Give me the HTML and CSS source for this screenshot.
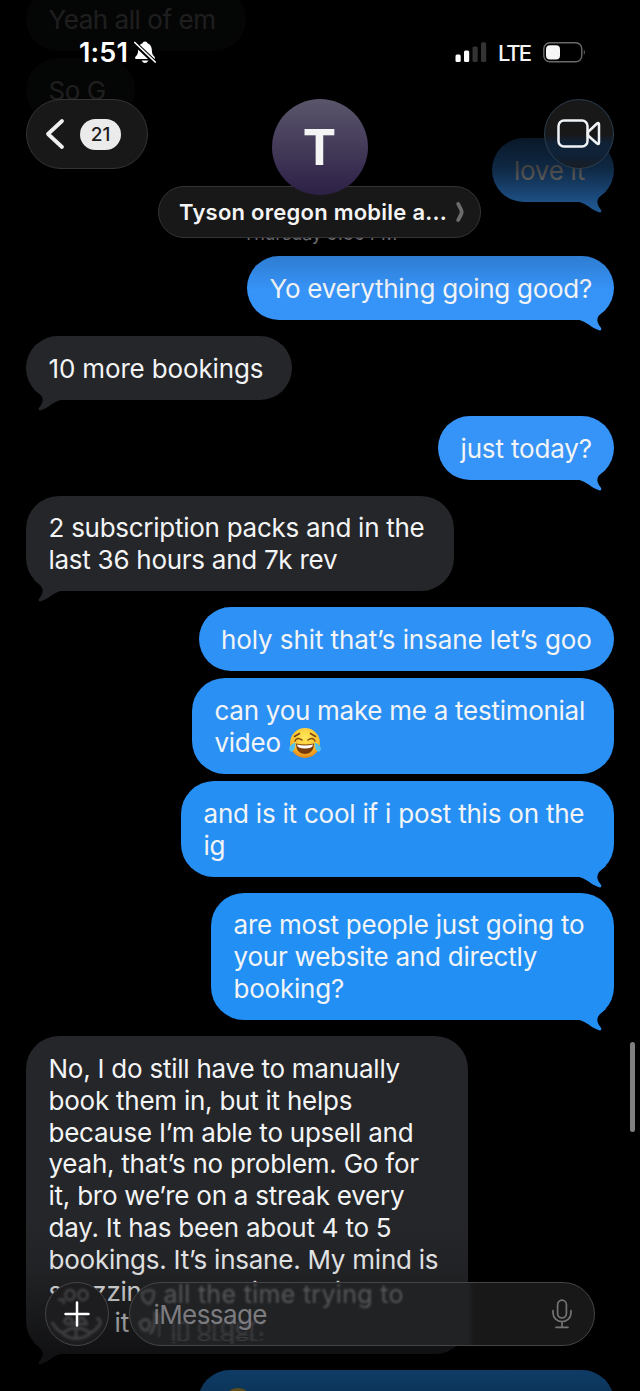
FILE: index.html
```html
<!DOCTYPE html>
<html lang="en">
<head>
<meta charset="utf-8">
<title>Messages</title>
<link rel="stylesheet" href="styles.css">
</head>
<body>
<svg width="0" height="0" class="defs">
  <defs>
    <radialGradient id="face" cx="50%" cy="30%" r="75%"><stop offset="0" stop-color="#ffe95a"/><stop offset=".6" stop-color="#fbc02d"/><stop offset="1" stop-color="#e07a12"/></radialGradient>
    <symbol id="tail" viewBox="0 0 32 26"><path fill="currentColor" d="M-2 15C5 15 10 22 19 25.300Q22.500 26 20.800 22.500C17 17.500 16.500 14.500 18.500 11Q20 8 26 4L16 0H0Z"/></symbol>
    <symbol id="joy" viewBox="0 0 32 32">
      <circle cx="16" cy="16" r="15" fill="url(#face)"/>
      <path d="M6 14q2-4.500 7-1M19 13q5-3.500 7 1M5.500 9.500l5-3M21.500 6.500l5 3" fill="none" stroke="#7b4310" stroke-width="1.500" stroke-linecap="round"/>
      <path d="M7 16.500Q16 18.500 25 16.500Q25 27 16 27Q7 27 7 16.500Z" fill="#7a3b0c"/>
      <path d="M8 17.500Q16 19.500 24 17.500Q24 21.500 16 21.500Q8 21.500 8 17.500Z" fill="#fff"/>
      <path d="M6.500 15.500Q0 18 0 22Q1 26 4 24Q6 22 6.500 15.500ZM25.500 15.500Q32 18 32 22Q31 26 28 24Q26 22 25.500 15.500Z" fill="#4fc3ee"/>
    </symbol>
  </defs>
</svg>
<div class="screen">
  <main class="thread">
    <div class="msg in w-yeah"><p>Yeah all of em</p></div>
    <div class="msg in w-sog"><p>So G</p></div>
    <div class="msg out w-love first-out"><p>love it</p><svg class="tail"><use href="#tail"/></svg></div>
    <div class="date">Thursday 9:36 PM</div>
    <div class="msg out w-yo"><p>Yo everything going good?</p><svg class="tail"><use href="#tail"/></svg></div>
    <div class="msg in w-ten turn"><p>10 more bookings</p><svg class="tail"><use href="#tail"/></svg></div>
    <div class="msg out w-just turn"><p>just today?</p><svg class="tail"><use href="#tail"/></svg></div>
    <div class="msg in w-two turn"><p>2 subscription packs and in the<br>last 36 hours and 7k rev</p><svg class="tail"><use href="#tail"/></svg></div>
    <div class="msg out w-holy turn tone-b"><p>holy shit that’s insane let’s goo</p></div>
    <div class="msg out w-can tone-c"><p>can you make me a testimonial<br>video <svg class="emoji"><use href="#joy"/></svg></p></div>
    <div class="msg out w-and tone-d"><p>and is it cool if i post this on the<br>ig</p><svg class="tail"><use href="#tail"/></svg></div>
    <div class="msg out w-are turn tone-e"><p>are most people just going to<br>your website and directly<br>booking?</p><svg class="tail"><use href="#tail"/></svg></div>
    <div class="msg in w-no turn"><p>No, I do still have to manually<br>book them in, but it helps<br>because I’m able to upsell and<br>yeah, that’s no problem. Go for<br>it, bro we’re on a streak every<br>day. It has been about 4 to 5<br>bookings. It’s insane. My mind is<br>spazzing all the time trying to<br><span class="lead">see</span> it all in order.</p><svg class="tail"><use href="#tail"/></svg></div>
    <div class="msg out w-last turn tone-e"><p><svg class="emoji"><use href="#joy"/></svg></p></div>
  </main>
  <div class="fade-top"></div>
  <div class="fade-bottom"></div>
  <div class="scrollbar"></div>

  <header class="top">
    <div class="status">
      <div class="clock">1:51
        <svg width="22" height="23" viewBox="0 0 22 23"><path d="M11 .5C9.500.5 8.700 1.400 8.500 2.300C5.500 3.200 4.200 6 4.100 9.500C4 13 3.200 14 1.500 15.700Q.2 17.500 2 18H20Q21.800 17.500 20.500 15.700C18.800 14 18 13 17.900 9.500C17.800 6 16.500 3.200 13.500 2.300C13.300 1.400 12.500.5 11 .5ZM7.500 19.500Q11 24.500 14.500 19.500Z" fill="#fff"/><path d="M.5 2L21 21.500" stroke="#000" stroke-width="4.500"/><path d="M.8 1.500L21.200 21" stroke="#fff" stroke-width="1.700" stroke-linecap="round"/></svg>
      </div>
      <div class="signals">
        <svg width="32" height="21" viewBox="0 0 32 21"><rect x=".5" y="12.500" width="5.200" height="7.500" rx="1.500" fill="#fff"/><rect x="9" y="8.500" width="5.200" height="11.500" rx="1.500" fill="#fff"/><rect x="17.500" y="4.500" width="5.200" height="15.500" rx="1.500" fill="#333"/><rect x="26" y=".3" width="5.200" height="19.700" rx="1.500" fill="#333"/></svg>
        <span class="lte">LTE</span>
        <svg width="43" height="21" viewBox="0 0 43 21"><rect x=".8" y=".8" width="38" height="19" rx="6" fill="none" stroke="#6a6a6a" stroke-width="1.400"/><rect x="3" y="3.200" width="14" height="14.300" rx="4" fill="#f6f6f6"/><path d="M40.800 7.500Q43 10.300 40.800 13Z" fill="#6a6a6a"/></svg>
      </div>
    </div>
    <div class="nav">
      <div class="back glass">
        <svg width="20" height="32" viewBox="0 0 20 32"><path d="M17 3L3 16L17 29" fill="none" stroke="#efefef" stroke-width="3.800" stroke-linecap="round" stroke-linejoin="round"/></svg>
        <span class="count">21</span>
      </div>
      <div class="contact">
        <div class="avatar">T</div>
        <div class="name glass"><span>Tyson oregon mobile a...</span><svg width="9" height="20" viewBox="0 0 9 20"><path d="M2.200 2L5 7.500Q6.300 10 5 12.500L2.200 18" fill="none" stroke="#6c6c6c" stroke-width="3.800" stroke-linecap="round"/></svg></div>
      </div>
      <div class="video glass">
        <svg width="44" height="30" viewBox="0 0 44 30"><rect x="1.500" y="1.500" width="29" height="26" rx="5.500" fill="none" stroke="#f0f3f6" stroke-width="2.500"/><path d="M31 13L40 4.500Q42 3 42 5.500V23.500Q42 26 40 24.500L31 16.500Z" fill="none" stroke="#f0f3f6" stroke-width="2.500" stroke-linejoin="round"/></svg>
      </div>
    </div>
  </header>

  <footer class="composer">
    <div class="plus">
      <svg class="refraction" width="61" height="61" viewBox="0 0 61 61"><g fill="none" stroke="#3e3e40" stroke-width="3"><ellipse cx="24" cy="12" rx="4.500" ry="5"/><ellipse cx="37" cy="12" rx="4.500" ry="5"/><path d="M12 17Q20 15 17 21M18 40Q19 34 24 35Q28 38 26 42M31 40Q32 34 37 35Q41 38 39 42M19 41H42M6 39Q10 47 17 50Q23 45 30 45Q38 45 44 50Q51 47 55 39M17 51Q30 60 44 51M30 46V55M50 36Q55 35 54 40"/></g></svg>
      <svg class="sign" width="26" height="26" viewBox="0 0 26 26"><path d="M13 1.500V24.500M1.500 13H24.500" stroke="#fff" stroke-width="2.500" stroke-linecap="round"/></svg>
    </div>
    <div class="field">
      <svg class="refraction" width="30" height="61" viewBox="0 0 30 61"><g fill="none" stroke="#454547" stroke-width="3"><path d="M12 10Q20 5 24 9Q24 17 19 21Q12 19 12 10ZM10 40Q16 33 20 40Q19 49 14 47Q10 44 10 40ZM25 28Q26 45 20 51M30 54V30"/></g></svg>
      <span class="ghost ghost-c">all the time trying to</span>
      <span class="ghost ghost-d">in order:</span>
      <span class="ghost ghost-e">in order:</span>
      <span class="placeholder">iMessage</span>
      <svg width="20" height="30" viewBox="0 0 20 30"><rect x="5.600" y="1.200" width="8.800" height="17.800" rx="4.400" fill="none" stroke="#747476" stroke-width="1.700"/><path d="M1 11.500V14A9 8.500 0 0 0 19 14V11.500M10 22.500V28M4 28.300H16" fill="none" stroke="#747476" stroke-width="1.700" stroke-linecap="round"/></svg>
    </div>
  </footer>
</div>
</body>
</html>
```
FILE: styles.css
```css
* { box-sizing: border-box; }
body { margin: 0; background: #000; }
.defs { position: absolute; }
.screen {
  position: relative;
  width: 640px;
  height: 1391px;
  overflow: hidden;
  background: #000;
  font-family: Inter, "Liberation Sans", sans-serif;
  color: #f4f4f5;
}

/* conversation */
.thread {
  display: flex;
  flex-direction: column;
  margin-top: -13px;
  padding: 0 26px;
}
.msg {
  position: relative;
  flex: none;
  padding: 16.900px 0 15.200px 22.500px;
  margin-bottom: 7px;
  border-radius: 33px;
  font-size: 26px;
  line-height: 31.820px;
  letter-spacing: -.27px;
  white-space: nowrap;
}
.msg p { margin: 0; }
.in { align-self: flex-start; background: #252629; color: #252629; }
.out { align-self: flex-end; background: #3693f7; color: #3693f7; }
.msg p { color: #f3f4f5; }
.turn { margin-top: 9px; }
.tone-b { background: #2e91f5; color: #2e91f5; }
.tone-c { background: #2b90f4; color: #2b90f4; }
.tone-d { background: #268ff4; color: #268ff4; }
.tone-e { background: #228ff4; color: #228ff4; }
.tail { position: absolute; right: 2px; bottom: -11px; width: 32px; height: 26px; overflow: visible; }
.in .tail { right: auto; left: 2px; transform: scaleX(-1); }
.emoji { width: 32px; height: 32px; margin: -5px 0 -5px 1px; vertical-align: -5px; position: relative; top: -3px; }
.lead { display: inline-block; width: 59px; text-align: center; }
.w-yeah { width: 220px; letter-spacing: -.45px; }
.w-sog { width: 109px; letter-spacing: -.45px; }
.w-love { width: 122.500px; }
.first-out { margin-top: 9px; }
.w-yo { width: 367px; }
.w-ten { width: 266px; letter-spacing: -.15px; }
.w-just { width: 176px; letter-spacing: -.15px; }
.w-two { width: 428px; }
.w-holy { width: 415.500px; letter-spacing: -.1px; }
.w-can { width: 422px; }
.w-and { width: 433px; letter-spacing: -.22px; }
.w-are { width: 403px; letter-spacing: -.22px; }
.w-no { width: 442px; letter-spacing: -.24px; }
.w-last { width: 416px; }
.date {
  align-self: center;
  height: 47.200px;
  padding-top: 14px;
  font-size: 18px;
  line-height: 22px;
  letter-spacing: -.15px;
  color: #8d8d93;
}
.fade-top, .fade-bottom { position: absolute; left: 0; right: 0; }
.fade-top {
  top: 0;
  height: 290px;
  background: linear-gradient(rgba(0,0,0,.88) 0, rgba(0,0,0,.88) 110px, rgba(0,0,0,.83) 140px, rgba(0,0,0,.73) 168px, rgba(0,0,0,.46) 202px, rgba(0,0,0,.14) 258px, transparent 290px);
}
.fade-bottom {
  bottom: 0;
  height: 171px;
  background: linear-gradient(transparent, rgba(0,0,0,.1) 50px, rgba(0,0,0,.55) 134px, rgba(0,0,0,.63));
}
.scrollbar {
  position: absolute;
  left: 630px;
  top: 1042px;
  width: 5px;
  height: 90px;
  border-radius: 3px;
  background: #808080;
}

/* header */
.top { position: absolute; inset: 0 0 auto; }
.status {
  display: flex;
  justify-content: space-between;
  align-items: center;
  height: 70px;
  padding: 35px 54px 0 79px;
}
.clock { display: flex; align-items: center; gap: 6px; font-size: 27px; font-weight: 600; letter-spacing: .15px; color: #fff; }
.signals { display: flex; align-items: center; }
.lte { margin: 0 13px 0 11px; font-size: 22px; font-weight: 500; letter-spacing: -2px; }
.nav {
  display: flex;
  justify-content: space-between;
  align-items: flex-start;
  padding: 29px 26px 0;
}
.glass { background: #181818; border: 1.500px solid #343436; }
.back {
  display: flex;
  align-items: center;
  gap: 15px;
  width: 122px;
  height: 70px;
  padding-left: 18px;
  border-radius: 35px;
}
.count {
  width: 41px;
  height: 31px;
  border-radius: 16px;
  background: #ebebeb;
  color: #1b1b1b;
  font-size: 19px;
  font-weight: 500;
  line-height: 31px;
  text-align: center;
}
.contact { display: flex; flex-direction: column; align-items: center; margin-left: -53px; }
.avatar {
  z-index: 1;
  width: 96px;
  height: 96px;
  border-radius: 50%;
  background: linear-gradient(#5a556b, #2d2046);
  font-size: 50px;
  font-weight: 700;
  line-height: 96px;
  text-align: center;
}
.name {
  display: flex;
  align-items: center;
  gap: 9px;
  width: 323px;
  height: 52px;
  margin-top: -9px;
  padding-left: 20px;
  border-radius: 26px;
  font-size: 22px;
  font-weight: 600;
  letter-spacing: .25px;
  white-space: nowrap;
}
.video {
  display: grid;
  place-items: center;
  width: 70px;
  height: 70px;
  border-radius: 50%;
  border-color: #2c3e50;
  background: linear-gradient(#181818 50%, #102238 64%, #0f2238 80%, #181c22);
}

/* composer */
.composer {
  position: absolute;
  inset: 1282px 45px auto;
  display: flex;
  gap: 19.500px;
}
.plus, .field {
  position: relative;
  overflow: hidden;
  height: 64px;
  border: 1.500px solid #454547;
  border-radius: 32px;
}
.plus { display: grid; place-items: center; width: 64px; background: #1d1d1f; }
.sign, .placeholder { position: relative; }
.refraction { position: absolute; left: 0; top: 0; filter: blur(1px); }
.field {
  display: flex;
  align-items: center;
  justify-content: space-between;
  flex: 1;
  padding: 0 22px 0 24px;
  background: linear-gradient(90deg, #212224 338px, #181818 344px);
}
.placeholder { font-size: 26px; color: #7c7c80; letter-spacing: -.6px; }
.ghost { position: absolute; white-space: nowrap; color: #58585b; filter: blur(1px); font-size: 25px; line-height: 26px; }
.ghost-c { left: 34px; top: -2px; letter-spacing: .3px; }
.ghost-d { left: 41px; top: 30px; color: #3e3e41; letter-spacing: -.5px; }
.ghost-e { left: 41px; top: 42px; color: #3e3e41; letter-spacing: -.5px; transform: scaleY(-.5); }
```
